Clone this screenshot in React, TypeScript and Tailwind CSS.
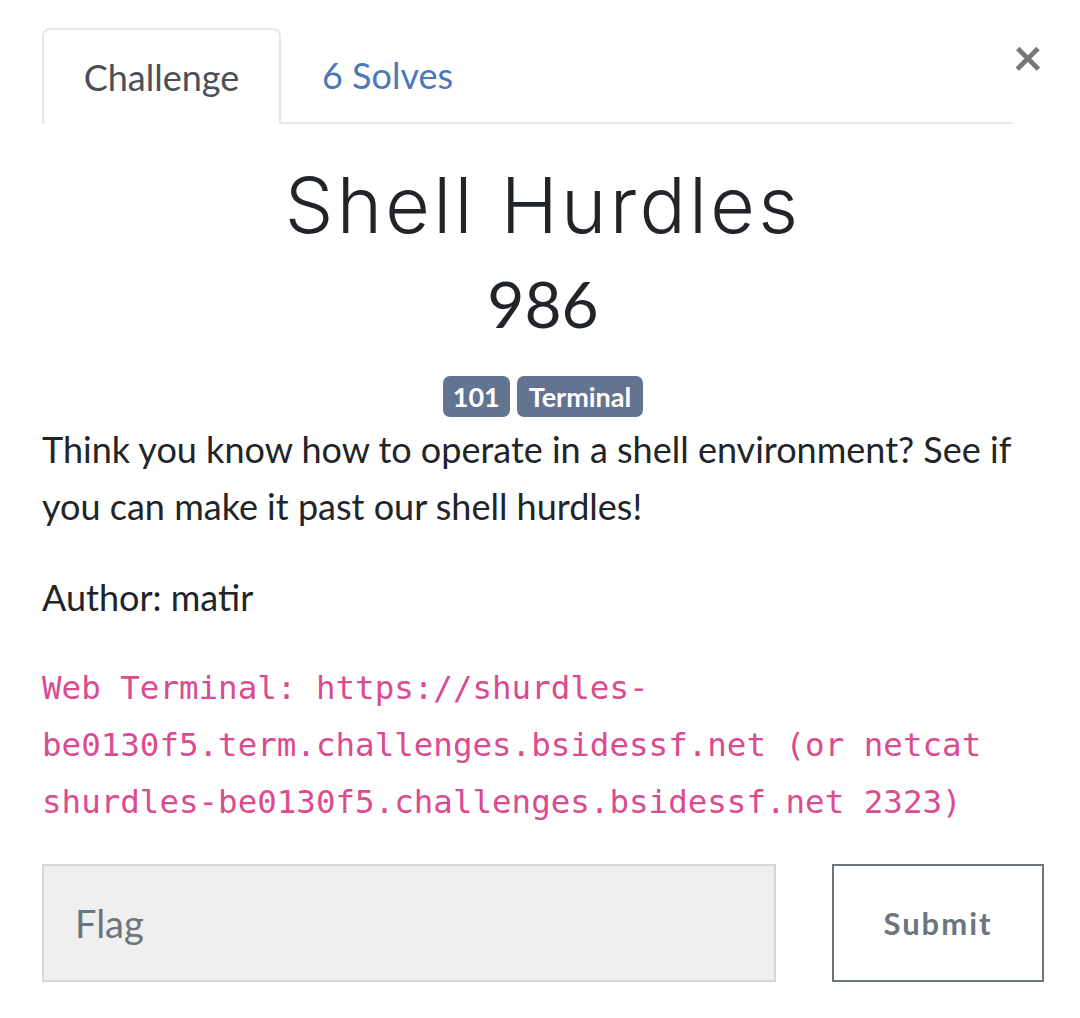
import React from 'react';

const lato = { fontFamily: 'Lato, "Liberation Sans", sans-serif' };

export default function App() {
  return (
    <div className="relative min-h-[1018px] w-[1080px] bg-white pl-[42px] pt-[28px] text-[#212529]" style={lato}>
      {/* Close */}
      <button className="absolute right-[37px] top-[30px] text-[52px] font-bold leading-none text-[#777]">
        ×
      </button>

      {/* Tabs */}
      <div className="flex w-[970px] border-b-2 border-[#e3e6ea]">
        <div className="-mb-[2px] flex h-[96px] w-[239px] items-center justify-center rounded-t-[8px] border-2 border-b-0 border-[#e3e6ea] bg-white text-[36px] text-[#495057]">
          Challenge
        </div>
        <div className="flex h-[94px] items-center pl-[41px] text-[36px] text-[#4a7ab5]">6 Solves</div>
      </div>

      <div className="w-[1002px]">
        {/* Title */}
        <h2
          className="mt-[36px] text-center text-[77px] font-light leading-[90px] tracking-[3.3px] text-[#212529]"
          style={{ fontFamily: 'Inter, "Open Sans", sans-serif' }}
        >
          Shell Hurdles
        </h2>
        <h3 className="mt-[14px] text-center text-[64px] leading-[80px] text-[#212529]">986</h3>

        {/* Tags */}
        <div className="mt-[32px] flex justify-center gap-[7px]">
          <span className="rounded-[7px] bg-[#627490] px-[10px] py-[3px] text-[27px] font-bold leading-[35px] text-white">101</span>
          <span className="rounded-[7px] bg-[#627490] px-[12px] py-[3px] text-[27px] font-bold leading-[35px] text-white">Terminal</span>
        </div>

        {/* Description */}
        <div className="mt-[4px] text-[36px] leading-[57px] text-[#212529]">
          <p>Think you know how to operate in a shell environment? See if you can make it past our shell hurdles!</p>
          <p className="mt-[34px]">Author: matir</p>
          <p
            className="mt-[34px] break-all text-[32.5px] leading-[57px] text-[#db4b8f]"
            style={{ fontFamily: '"DejaVu Sans Mono", "Liberation Mono", monospace' }}
          >
            Web Terminal: https://shurdles-
            <br />
            be0130f5.term.challenges.bsidessf.net (or netcat
            <br />
            shurdles-be0130f5.challenges.bsidessf.net 2323)
          </p>
        </div>

        {/* Flag form */}
        <div className="mt-[33px] flex items-center justify-between">
          <input
            placeholder="Flag"
            className="h-[118px] w-[734px] border-2 border-[#d4d8dc] bg-[#efefef] px-[31px] text-[38px] text-[#495057] placeholder:text-[#6c757d] focus:outline-none"
            style={lato}
          />
          <button className="h-[118px] w-[212px] border-2 border-[#6c757d] bg-white text-[31px] font-bold tracking-[2px] text-[#6c757d]">
            Submit
          </button>
        </div>
      </div>
    </div>
  );
}
